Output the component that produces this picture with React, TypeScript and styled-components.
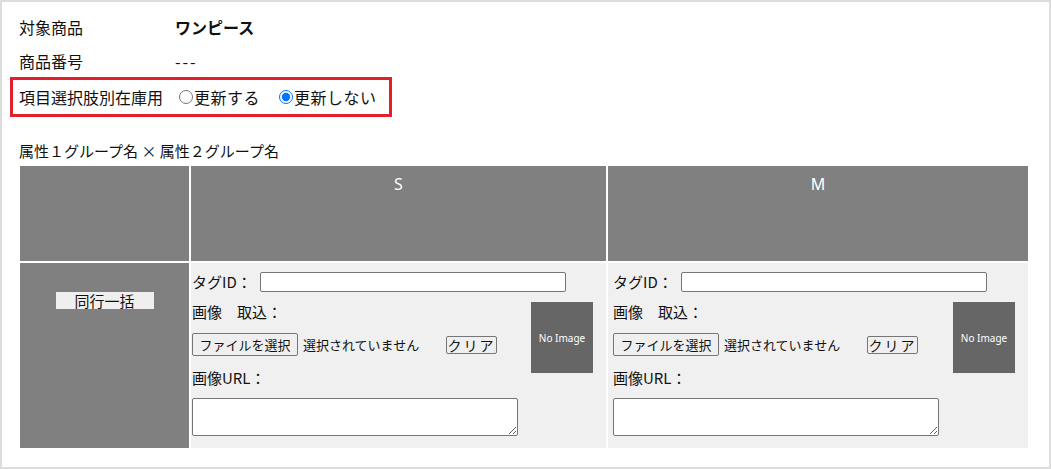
import { createGlobalStyle, styled } from 'styled-components';

const GlobalStyle = createGlobalStyle`
  html, body {
    margin: 0;
    padding: 0;
    background: #fff;
  }
  body {
    font-family: "Noto Sans CJK JP", "Noto Sans", sans-serif;
    color: #111;
  }
`;

const Page = styled.div`
  box-sizing: border-box;
  width: 1051px;
  height: 469px;
  border: 2px solid #dddddd;
  padding: 8px 0 0 17px;
  font-size: 16px;
`;

const InfoRow = styled.div`
  display: flex;
  align-items: center;
  height: 34px;
`;

const InfoLabel = styled.span`
  width: 156px;
  line-height: 20px;
`;

const InfoValue = styled.span<{ $bold?: boolean; $spaced?: boolean }>`
  line-height: 20px;
  font-weight: ${(p) => (p.$bold ? 700 : 400)};
  letter-spacing: ${(p) => (p.$spaced ? '2px' : 'normal')};
`;

const Highlight = styled.div`
  box-sizing: border-box;
  display: flex;
  align-items: center;
  width: 382px;
  height: 40px;
  margin: -1px 0 0 -9px;
  padding-left: 6px;
  border: 3px solid #e2202b;
`;

const RadioGroup = styled.div`
  display: flex;
  align-items: center;
  gap: 19px;
  margin-left: 16px;
`;

const RadioLabel = styled.label`
  display: flex;
  align-items: center;
  line-height: 20px;
  letter-spacing: 0.5px;
`;

const Radio = styled.input`
  width: 14px;
  height: 14px;
  margin: 0 1px 0 0;
`;

const Caption = styled.div`
  margin-top: 23px;
  font-size: 15px;
  line-height: 22px;
`;

const Grid = styled.div`
  display: grid;
  grid-template-columns: 169px 415px 420px;
  grid-template-rows: 95px 185px;
  gap: 2px;
  margin: 4px 0 0 1px;
`;

const HeadCell = styled.div`
  background: #808080;
  color: #fff;
  font-family: "Noto Sans", "Noto Sans CJK JP", sans-serif;
  font-size: 16px;
  line-height: 20px;
  text-align: center;
  padding-top: 8px;
`;

const RowHead = styled.div`
  background: #808080;
  display: flex;
  justify-content: center;
  align-items: flex-start;
  padding-top: 29px;
`;

const BulkButton = styled.button`
  width: 98px;
  height: 17px;
  padding: 0;
  border: none;
  background: #efefef;
  font-family: inherit;
  font-size: 15px;
  line-height: 17px;
  color: #111;
`;

const BodyCell = styled.div<{ $inset: number }>`
  background: #f0f0f0;
  padding: 9px 13px 0 ${(p) => p.$inset}px;
  font-size: 15px;
`;

const FieldLine = styled.div`
  display: flex;
  align-items: center;
  line-height: 20px;
`;

const TagInput = styled.input`
  box-sizing: border-box;
  width: 306px;
  height: 20px;
  margin-left: 8px;
  border: 1px solid #767676;
  border-radius: 2px;
  background: #fff;
`;

const LowerArea = styled.div`
  display: flex;
  justify-content: space-between;
  margin-top: 10px;
`;

const Fields = styled.div`
  display: flex;
  flex-direction: column;
`;

const Label = styled.div`
  line-height: 20px;
`;

const FileRow = styled.div`
  display: flex;
  align-items: center;
  margin-top: 11px;
  font-size: 13px;
`;

const FileButton = styled.button`
  box-sizing: border-box;
  height: 23px;
  width: 106px;
  padding: 0;
  border: 1px solid #767676;
  border-radius: 2px;
  background: #efefef;
  font-family: inherit;
  font-size: 13px;
  color: #111;
`;

const FileText = styled.span`
  margin-left: 5px;
  width: 143px;
`;

const ClearButton = styled.button`
  box-sizing: border-box;
  height: 18px;
  width: 51px;
  padding: 0;
  border: 1px solid #767676;
  border-radius: 2px;
  background: #efefef;
  font-family: inherit;
  font-size: 14px;
  line-height: 16px;
  letter-spacing: 2px;
  color: #111;
`;

const UrlLabel = styled(Label)`
  margin-top: 12px;
`;

const UrlArea = styled.textarea`
  box-sizing: border-box;
  width: 326px;
  height: 38px;
  margin-top: 10px;
  border: 1px solid #767676;
  border-radius: 2px;
  background: #fff;
`;

const NoImage = styled.div`
  width: 62px;
  height: 71px;
  background: #666;
  color: #fff;
  font-family: "Noto Sans", sans-serif;
  font-size: 10px;
  display: flex;
  align-items: center;
  justify-content: center;
`;

const columns = [
  { size: 'S', inset: 1 },
  { size: 'M', inset: 5 },
];

const OptionCell = ({ inset }: { inset: number }) => (
  <BodyCell $inset={inset}>
    <FieldLine>
      タグID：
      <TagInput type="text" />
    </FieldLine>
    <LowerArea>
      <Fields>
        <Label>画像　取込：</Label>
        <FileRow>
          <FileButton>ファイルを選択</FileButton>
          <FileText>選択されていません</FileText>
          <ClearButton>クリア</ClearButton>
        </FileRow>
        <UrlLabel>画像URL：</UrlLabel>
        <UrlArea />
      </Fields>
      <NoImage>No Image</NoImage>
    </LowerArea>
  </BodyCell>
);

export default function App() {
  return (
    <Page>
      <GlobalStyle />
      <InfoRow>
        <InfoLabel>対象商品</InfoLabel>
        <InfoValue $bold>ワンピース</InfoValue>
      </InfoRow>
      <InfoRow>
        <InfoLabel>商品番号</InfoLabel>
        <InfoValue $spaced>---</InfoValue>
      </InfoRow>
      <Highlight>
        <InfoValue>項目選択肢別在庫用</InfoValue>
        <RadioGroup>
          <RadioLabel>
            <Radio type="radio" name="stock" />
            更新する
          </RadioLabel>
          <RadioLabel>
            <Radio type="radio" name="stock" defaultChecked />
            更新しない
          </RadioLabel>
        </RadioGroup>
      </Highlight>
      <Caption>属性１グループ名 × 属性２グループ名</Caption>
      <Grid>
        <HeadCell />
        {columns.map((c) => (
          <HeadCell key={c.size}>{c.size}</HeadCell>
        ))}
        <RowHead>
          <BulkButton>同行一括</BulkButton>
        </RowHead>
        {columns.map((c) => (
          <OptionCell key={c.size} inset={c.inset} />
        ))}
      </Grid>
    </Page>
  );
}
